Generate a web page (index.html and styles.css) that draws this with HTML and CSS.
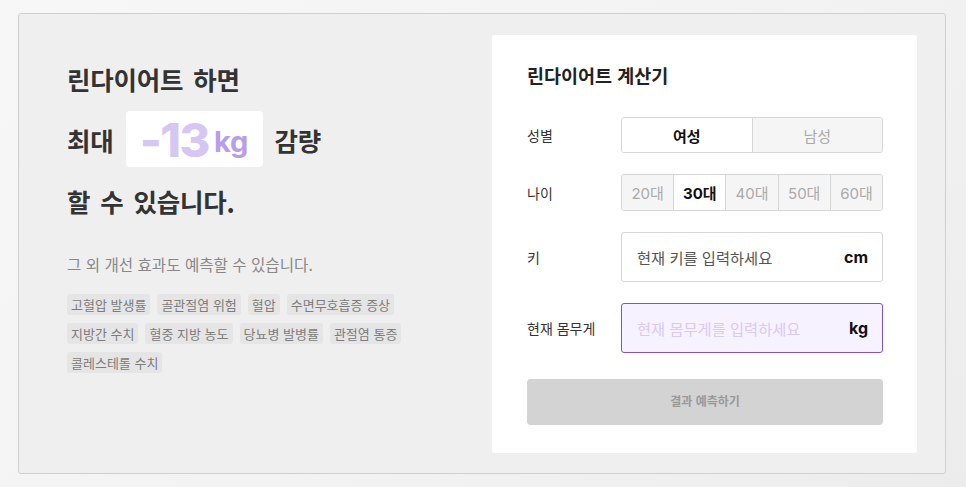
FILE: index.html
```html
<!DOCTYPE html>
<html lang="ko">
<head>
<meta charset="utf-8">
<link rel="stylesheet" href="styles.css">
</head>
<body>
<div class="frame">
  <section class="intro">
    <div class="headline">
      <div class="hl-line">린다이어트 하면</div>
      <div class="hl-line"><span>최대</span><span class="badge"><span class="num">-13</span><span class="unit">kg</span></span><span>감량</span></div>
      <div class="hl-line">할 수 있습니다.</div>
    </div>
    <p class="sub">그 외 개선 효과도 예측할 수 있습니다.</p>
    <ul class="tags">
      <li>고혈압 발생률</li>
      <li>골관절염 위험</li>
      <li>혈압</li>
      <li>수면무호흡증 증상</li>
      <li>지방간 수치</li>
      <li>혈중 지방 농도</li>
      <li>당뇨병 발병률</li>
      <li>관절염 통증</li>
      <li>콜레스테롤 수치</li>
    </ul>
  </section>
  <section class="card">
    <h2 class="card-title">린다이어트 계산기</h2>
    <div class="row">
      <span class="label">성별</span>
      <div class="seg seg-2">
        <span class="opt on">여성</span>
        <span class="opt">남성</span>
      </div>
    </div>
    <div class="row">
      <span class="label">나이</span>
      <div class="seg seg-5">
        <span class="opt">20대</span>
        <span class="opt on">30대</span>
        <span class="opt">40대</span>
        <span class="opt">50대</span>
        <span class="opt">60대</span>
      </div>
    </div>
    <div class="row">
      <span class="label">키</span>
      <div class="field">
        <span class="ph">현재 키를 입력하세요</span>
        <span class="suffix">cm</span>
      </div>
    </div>
    <div class="row row-last">
      <span class="label">현재 몸무게</span>
      <div class="field focus">
        <span class="ph">현재 몸무게를 입력하세요</span>
        <span class="suffix">kg</span>
      </div>
    </div>
    <button class="submit" type="button">결과 예측하기</button>
  </section>
</div>
</body>
</html>
```

FILE: styles.css
```css
* { box-sizing: border-box; }
html, body { margin: 0; padding: 0; }
body {
  width: 966px;
  height: 487px;
  background: linear-gradient(135deg, #f7f7f7 0%, #f2f2f2 60%, #ececec 100%);
  font-family: "Noto Sans CJK KR", "Noto Sans", sans-serif;
  padding: 13px 20px 13px 18px;
}
.frame {
  display: flex;
  justify-content: space-between;
  width: 928px;
  height: 461px;
  background: #efefef;
  border: 1px solid #cfcfcf;
  border-radius: 3px;
  padding: 21px 28px 20px 48px;
}
.intro {
  padding-top: 15px;
  width: 400px;
}
.headline {
  display: flex;
  flex-direction: column;
  gap: 5px;
}
.hl-line {
  height: 56px;
  display: flex;
  align-items: center;
  gap: 12px;
  font-size: 25.5px;
  font-weight: 700;
  color: #333;
  letter-spacing: -0.2px;
  word-spacing: 3px;
  white-space: pre;
}
.badge {
  width: 137px;
  height: 56px;
  background: #fff;
  border-radius: 4px;
  display: flex;
  align-items: center;
  justify-content: center;
  gap: 5px;
  font-family: Inter, "Noto Sans", sans-serif;
  letter-spacing: 0;
  word-spacing: 0;
}
.badge .num {
  font-size: 47px;
  font-weight: 800;
  color: #d5c6f3;
  letter-spacing: -1.5px;
  line-height: 1;
}
.badge .unit {
  font-size: 29px;
  font-weight: 700;
  color: #b79eea;
  line-height: 1;
  margin-top: 4px;
}
.sub {
  margin: 25px 0 0;
  font-size: 15.6px;
  line-height: 22px;
  color: #888;
}
.tags {
  list-style: none;
  margin: 19px 0 0;
  padding: 0;
  display: flex;
  flex-wrap: wrap;
  gap: 8px 7px;
  width: 350px;
}
.tags li {
  height: 21px;
  line-height: 21px;
  padding: 0 4px;
  background: #e5e5e5;
  border-radius: 3px;
  font-size: 13px;
  color: #7c7c7c;
}
.card {
  width: 425px;
  background: #fff;
  border-radius: 3px;
  padding: 28px 34px 28px 35px;
  display: flex;
  flex-direction: column;
}
.card-title {
  margin: 0 0 30px;
  font-size: 18.5px;
  line-height: 24px;
  font-weight: 700;
  color: #222;
}
.row {
  display: flex;
  align-items: center;
  margin-bottom: 21px;
}
.row .label {
  width: 94px;
  flex: none;
  font-size: 14px;
  color: #333;
}
.seg {
  flex: 1;
  display: flex;
  border: 1px solid #d6d6d6;
  border-radius: 3px;
  overflow: hidden;
}
.seg .opt {
  flex: 1;
  display: flex;
  align-items: center;
  justify-content: center;
  background: #f5f5f5;
  color: #aaa;
  font-size: 15px;
}
.seg .opt + .opt { border-left: 1px solid #d6d6d6; }
.seg .opt.on {
  background: #fff;
  color: #111;
  font-weight: 700;
}
.seg-2 { height: 36px; }
.seg-5 { height: 37px; }
.seg-5 .opt { font-family: Inter, "Noto Sans CJK KR", sans-serif; }
.field {
  flex: 1;
  height: 50px;
  display: flex;
  align-items: center;
  justify-content: space-between;
  padding: 0 14px 0 15px;
  border: 1px solid #d6d6d6;
  border-radius: 3px;
  background: #fff;
}
.field .ph {
  font-size: 15.3px;
  color: #555;
}
.field .suffix {
  font-family: Inter, "Noto Sans", sans-serif;
  font-size: 16px;
  font-weight: 700;
  color: #111;
}
.field.focus {
  border-color: #8150e0;
  background: #f7f2ff;
}
.field.focus .ph { color: #d9c9f5; }
.row-last { margin-bottom: 26px; }
.submit {
  height: 46px;
  width: 100%;
  border: 0;
  border-radius: 4px;
  background: #d3d3d3;
  color: #999;
  font-family: "Noto Sans CJK KR", sans-serif;
  font-size: 12px;
  font-weight: 700;
  padding: 0 0 3px;
}
```
